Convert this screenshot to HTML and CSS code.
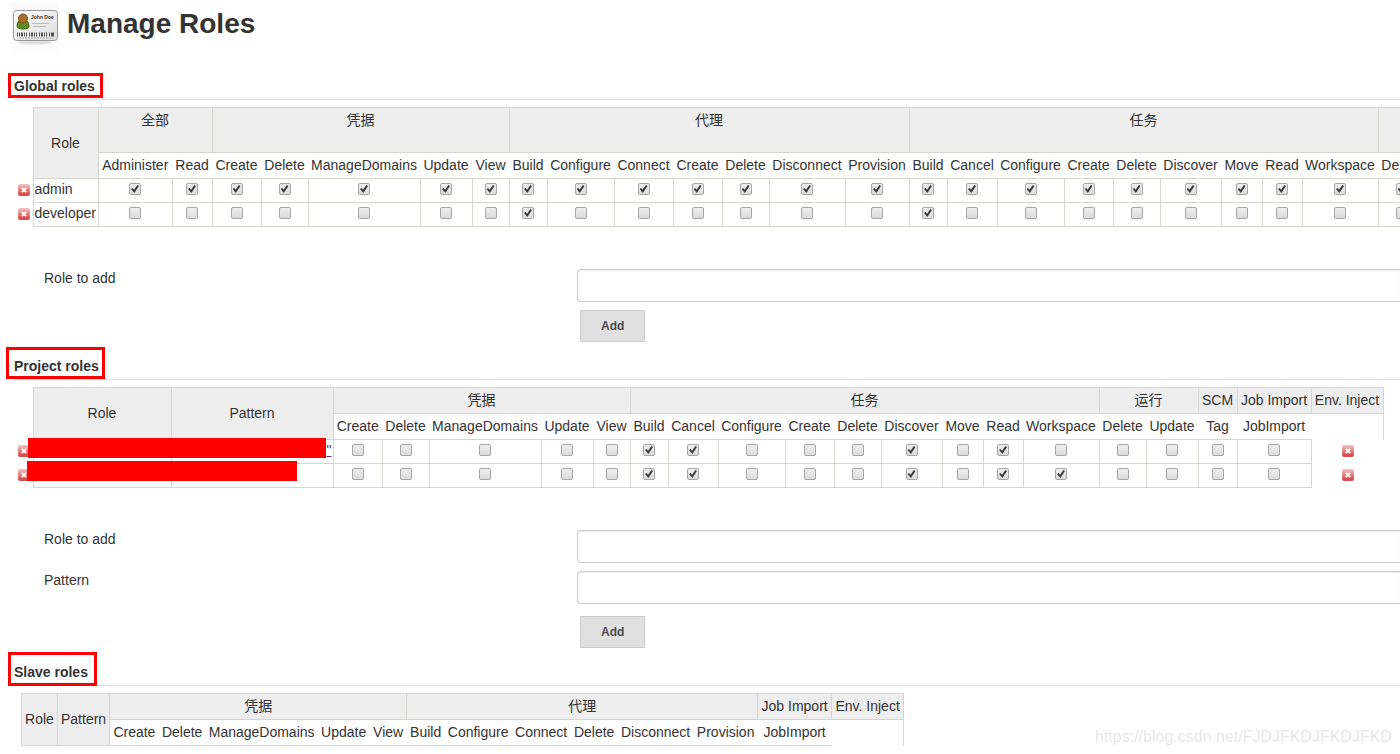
FILE: index.html
```html
<!DOCTYPE html>
<html lang="en">
<head>
<meta charset="utf-8">
<title>Manage Roles</title>
<link rel="stylesheet" href="styles.css">
</head>
<body>
<svg class="defs" aria-hidden="true">
  <defs>
    <linearGradient id="red" x1="0" y1="0" x2="0" y2="1"><stop offset="0" stop-color="#f3bcbc"/><stop offset="1" stop-color="#d93a3a"/></linearGradient>
    <linearGradient id="edge" x1="0" y1="0" x2="0" y2="1"><stop offset="0" stop-color="#f0c4c4"/><stop offset="1" stop-color="#d65050"/></linearGradient>
    <linearGradient id="card" x1="0" y1="0" x2="1" y2="1"><stop offset="0" stop-color="#ffffff"/><stop offset="1" stop-color="#dcdcdc"/></linearGradient>
    <symbol id="x" viewBox="0 0 16 16">
      <rect x="2.5" y="2.5" width="11" height="11" rx="1" fill="url(#red)" stroke="url(#edge)"/>
      <path d="M5.8 5.8l4.4 4.4M10.2 5.8l-4.4 4.4" stroke="#fff" stroke-width="1.8"/>
    </symbol>
  </defs>
</svg>
<main class="page">
  <header class="title">
    <svg class="title-icon" viewBox="0 0 48 48" aria-hidden="true">
      <rect width="48" height="48" fill="#fbfbfb"/>
      <ellipse cx="24" cy="40.500" rx="17" ry="2" fill="#e0e0e0"/>
      <rect x="2.500" y="8.500" width="44" height="30" rx="3" fill="url(#card)" stroke="#999"/>
      <path d="M6 24q0-6 6-6t6 6q0 3-6 3t-6-3z" fill="#5d8a1e" stroke="#40650f"/>
      <circle cx="12" cy="16.500" r="4.500" fill="#a8702a" stroke="#7b4b14"/>
      <text class="card-name" x="20" y="17">John Doe</text>
      <path d="M21 21.500h17M22 24.500h13" stroke="#bbb"/>
      <path d="M6.500 30.500v4M42.500 30.500v4" stroke="#555"/>
      <path d="M8 32.500h34" stroke="#555" stroke-width="4" stroke-dasharray="1 1 2 1 1 1 1 2"/>
      <path d="M8 36h34" stroke="#aaa" stroke-dasharray="2 1"/>
    </svg>
    <h1>Manage Roles</h1>
  </header>

  <section>
    <h2><span class="marked">Global roles</span></h2>
    <table class="roles tall">
      <colgroup><col class="c-tool"><col class="c-developer"><col class="c-administer"><col class="c-read"><col class="c-create"><col class="c-delete"><col class="c-domains"><col class="c-update"><col class="c-view"><col class="c-build"><col class="c-configure"><col class="c-connect"><col class="c-create"><col class="c-delete"><col class="c-workspace"><col class="c-provision"><col class="c-build"><col class="c-cancel"><col class="c-configure"><col class="c-create"><col class="c-delete"><col class="c-discover"><col class="c-move"><col class="c-read"><col class="c-workspace"><col class="c-delete"></colgroup>
      <thead>
        <tr><td class="tool" rowspan="2"></td><th class="group name" rowspan="2">Role</th><th class="group" colspan="2">全部</th><th class="group" colspan="5">凭据</th><th class="group" colspan="7">代理</th><th class="group" colspan="9">任务</th><th class="group"></th></tr>
        <tr><th>Administer</th><th>Read</th><th>Create</th><th>Delete</th><th>ManageDomains</th><th>Update</th><th>View</th><th>Build</th><th>Configure</th><th>Connect</th><th>Create</th><th>Delete</th><th>Disconnect</th><th>Provision</th><th>Build</th><th>Cancel</th><th>Configure</th><th>Create</th><th>Delete</th><th>Discover</th><th>Move</th><th>Read</th><th>Workspace</th><th>Delete</th></tr>
      </thead>
      <tbody>
        <tr>
          <td class="tool"><button class="remove" type="button" aria-label="Remove admin"><svg><use href="#x"/></svg></button></td><td class="who">admin</td>
          <td><input type="checkbox" aria-label="Administer" checked></td><td><input type="checkbox" aria-label="Read" checked></td>
          <td><input type="checkbox" aria-label="Create" checked></td><td><input type="checkbox" aria-label="Delete" checked></td><td><input type="checkbox" aria-label="ManageDomains" checked></td><td><input type="checkbox" aria-label="Update" checked></td><td><input type="checkbox" aria-label="View" checked></td>
          <td><input type="checkbox" aria-label="Build" checked></td><td><input type="checkbox" aria-label="Configure" checked></td><td><input type="checkbox" aria-label="Connect" checked></td><td><input type="checkbox" aria-label="Create" checked></td><td><input type="checkbox" aria-label="Delete" checked></td><td><input type="checkbox" aria-label="Disconnect" checked></td><td><input type="checkbox" aria-label="Provision" checked></td>
          <td><input type="checkbox" aria-label="Build" checked></td><td><input type="checkbox" aria-label="Cancel" checked></td><td><input type="checkbox" aria-label="Configure" checked></td><td><input type="checkbox" aria-label="Create" checked></td><td><input type="checkbox" aria-label="Delete" checked></td><td><input type="checkbox" aria-label="Discover" checked></td><td><input type="checkbox" aria-label="Move" checked></td><td><input type="checkbox" aria-label="Read" checked></td><td><input type="checkbox" aria-label="Workspace" checked></td>
          <td><input type="checkbox" aria-label="Delete" checked></td>
        </tr>
        <tr>
          <td class="tool"><button class="remove" type="button" aria-label="Remove developer"><svg><use href="#x"/></svg></button></td><td class="who">developer</td>
          <td><input type="checkbox" aria-label="Administer"></td><td><input type="checkbox" aria-label="Read"></td>
          <td><input type="checkbox" aria-label="Create"></td><td><input type="checkbox" aria-label="Delete"></td><td><input type="checkbox" aria-label="ManageDomains"></td><td><input type="checkbox" aria-label="Update"></td><td><input type="checkbox" aria-label="View"></td>
          <td><input type="checkbox" aria-label="Build" checked></td><td><input type="checkbox" aria-label="Configure"></td><td><input type="checkbox" aria-label="Connect"></td><td><input type="checkbox" aria-label="Create"></td><td><input type="checkbox" aria-label="Delete"></td><td><input type="checkbox" aria-label="Disconnect"></td><td><input type="checkbox" aria-label="Provision"></td>
          <td><input type="checkbox" aria-label="Build" checked></td><td><input type="checkbox" aria-label="Cancel"></td><td><input type="checkbox" aria-label="Configure"></td><td><input type="checkbox" aria-label="Create"></td><td><input type="checkbox" aria-label="Delete"></td><td><input type="checkbox" aria-label="Discover"></td><td><input type="checkbox" aria-label="Move"></td><td><input type="checkbox" aria-label="Read"></td><td><input type="checkbox" aria-label="Workspace"></td>
          <td><input type="checkbox" aria-label="Delete"></td>
        </tr>
      </tbody>
    </table>
    <form class="add">
      <div class="field"><label for="global-role">Role to add</label><input id="global-role" type="text"></div>
      <div class="field"><button class="submit" type="button">Add</button></div>
    </form>
  </section>

  <section>
    <h2><span class="marked project">Project roles</span></h2>
    <div class="covered">
    <table class="roles">
      <colgroup><col class="c-tool"><col class="c-name"><col class="c-pattern"><col class="c-create"><col class="c-delete"><col class="c-domains"><col class="c-update"><col class="c-view"><col class="c-build"><col class="c-cancel"><col class="c-configure"><col class="c-create"><col class="c-delete"><col class="c-discover"><col class="c-move"><col class="c-read"><col class="c-workspace"><col class="c-delete"><col class="c-update"><col class="c-tag"><col class="c-import"><col class="c-inject"></colgroup>
      <thead>
        <tr><td class="tool" rowspan="2"></td><th class="group name" rowspan="2">Role</th><th class="group name" rowspan="2">Pattern</th><th class="group" colspan="5">凭据</th><th class="group" colspan="9">任务</th><th class="group" colspan="2">运行</th><th class="group">SCM</th><th class="group">Job Import</th><th class="group">Env. Inject</th></tr>
        <tr><th>Create</th><th>Delete</th><th>ManageDomains</th><th>Update</th><th>View</th><th>Build</th><th>Cancel</th><th>Configure</th><th>Create</th><th>Delete</th><th>Discover</th><th>Move</th><th>Read</th><th>Workspace</th><th>Delete</th><th>Update</th><th>Tag</th><th>JobImport</th><td class="blank"></td></tr>
      </thead>
      <tbody>
        <tr>
          <td class="tool"><button class="remove" type="button" aria-label="Remove role"><svg><use href="#x"/></svg></button></td><td class="who"></td><td class="pattern"><a href="#">"</a></td>
          <td><input type="checkbox" aria-label="Create"></td><td><input type="checkbox" aria-label="Delete"></td><td><input type="checkbox" aria-label="ManageDomains"></td><td><input type="checkbox" aria-label="Update"></td><td><input type="checkbox" aria-label="View"></td>
          <td><input type="checkbox" aria-label="Build" checked></td><td><input type="checkbox" aria-label="Cancel" checked></td><td><input type="checkbox" aria-label="Configure"></td><td><input type="checkbox" aria-label="Create"></td><td><input type="checkbox" aria-label="Delete"></td><td><input type="checkbox" aria-label="Discover" checked></td><td><input type="checkbox" aria-label="Move"></td><td><input type="checkbox" aria-label="Read" checked></td><td><input type="checkbox" aria-label="Workspace"></td>
          <td><input type="checkbox" aria-label="Delete"></td><td><input type="checkbox" aria-label="Update"></td><td><input type="checkbox" aria-label="Tag"></td><td><input type="checkbox" aria-label="JobImport"></td>
          <td class="tool"><button class="remove" type="button" aria-label="Remove role"><svg><use href="#x"/></svg></button></td>
        </tr>
        <tr>
          <td class="tool"><button class="remove" type="button" aria-label="Remove role"><svg><use href="#x"/></svg></button></td><td class="who"></td><td class="pattern"></td>
          <td><input type="checkbox" aria-label="Create"></td><td><input type="checkbox" aria-label="Delete"></td><td><input type="checkbox" aria-label="ManageDomains"></td><td><input type="checkbox" aria-label="Update"></td><td><input type="checkbox" aria-label="View"></td>
          <td><input type="checkbox" aria-label="Build" checked></td><td><input type="checkbox" aria-label="Cancel" checked></td><td><input type="checkbox" aria-label="Configure"></td><td><input type="checkbox" aria-label="Create"></td><td><input type="checkbox" aria-label="Delete"></td><td><input type="checkbox" aria-label="Discover" checked></td><td><input type="checkbox" aria-label="Move"></td><td><input type="checkbox" aria-label="Read" checked></td><td><input type="checkbox" aria-label="Workspace" checked></td>
          <td><input type="checkbox" aria-label="Delete"></td><td><input type="checkbox" aria-label="Update"></td><td><input type="checkbox" aria-label="Tag"></td><td><input type="checkbox" aria-label="JobImport"></td>
          <td class="tool"><button class="remove" type="button" aria-label="Remove role"><svg><use href="#x"/></svg></button></td>
        </tr>
      </tbody>
    </table>
    <div class="cover first"></div>
    <div class="cover second"></div>
    </div>
    <form class="add">
      <div class="field"><label for="project-role">Role to add</label><input id="project-role" type="text"></div>
      <div class="field"><label for="project-pattern">Pattern</label><input id="project-pattern" type="text"></div>
      <div class="field spaced"><button class="submit" type="button">Add</button></div>
    </form>
  </section>

  <section>
    <h2><span class="marked slave">Slave roles</span></h2>
    <table class="roles empty">
      <colgroup><col class="c-role"><col class="c-update"><col class="c-create"><col class="c-delete"><col class="c-domains"><col class="c-update"><col class="c-view"><col class="c-build"><col class="c-configure"><col class="c-connect"><col class="c-delete"><col class="c-workspace"><col class="c-provision"><col class="c-import"><col class="c-inject"></colgroup>
      <thead>
        <tr><th class="group" rowspan="2">Role</th><th class="group" rowspan="2">Pattern</th><th class="group" colspan="5">凭据</th><th class="group" colspan="6">代理</th><th class="group">Job Import</th><th class="group">Env. Inject</th></tr>
        <tr><th>Create</th><th>Delete</th><th>ManageDomains</th><th>Update</th><th>View</th><th>Build</th><th>Configure</th><th>Connect</th><th>Delete</th><th>Disconnect</th><th>Provision</th><th>JobImport</th><td class="blank"></td></tr>
      </thead>
    </table>
  </section>
</main>
<div class="watermark">https://blog.csdn.net/FJDJFKDJFKDJFKD</div>
</body>
</html>
```
FILE: styles.css
```css
* { box-sizing: border-box; }

body {
  margin: 0;
  overflow: hidden;
  background: #fff;
  color: #333;
  font: 14px/17px "Liberation Sans", "Noto Sans CJK SC", sans-serif;
}

.defs { position: absolute; width: 0; height: 0; }

.page { padding: 2px 0 0 14px; }

.title {
  display: flex;
  align-items: flex-start;
  gap: 8px;
  height: 64px;
  margin-left: -3px;
}
.title-icon { width: 48px; height: 48px; }
.card-name { font: bold 5px "Liberation Sans", sans-serif; fill: #333; }
h1 { margin: 5px 0 0; font-size: 28px; line-height: 34px; }

section + section { margin-top: 4px; }

h2 {
  margin: 0 0 7px;
  padding: 12px 0 4px;
  border-bottom: 1px solid #ddd;
  font-size: 14px;
  line-height: 17px;
}
.marked { position: relative; }
.marked::after {
  content: "";
  position: absolute;
  inset: -5px -8px -4px -6px;
  border: 3px solid #f00;
}
.marked.project::after { inset: -11px -6px -5px -8px; }
.marked.slave::after { inset: -12px -9px -6px -6px; }

.roles {
  width: max-content;
  border-collapse: collapse;
  white-space: nowrap;
}
.roles.empty { margin-left: 7px; }
.roles th {
  padding: 4px 3px;
  border-bottom: 1px solid #d3d7cf;
  font-weight: normal;
}
.roles th.group {
  border: 1px solid #d3d7cf;
  background: #eee;
}
.tall th[colspan] { padding-bottom: 23px; }
.roles td {
  height: 24px;
  padding: 1px 1px 4px;
  border: 1px solid #d3d7cf;
  text-align: center;
}
.roles .tool { padding: 1px 0 2px 2px; border: 0; }
.roles .blank { border-width: 0 1px 0 0; }
.roles .who { text-align: left; }
.roles .pattern { text-align: right; }
.pattern a { color: #5c3566; }

.c-tool { width: 19px; }
.c-role { width: 36px; }
.c-view { width: 37px; }
.c-build { width: 38px; }
.c-tag { width: 39px; }
.c-read { width: 40px; }
.c-move { width: 41px; }
.c-delete { width: 47px; }
.c-create { width: 49px; }
.c-cancel { width: 50px; }
.c-update { width: 52px; }
.c-connect { width: 59px; }
.c-discover { width: 61px; }
.c-provision { width: 64px; }
.c-developer { width: 65px; }
.c-configure { width: 67px; }
.c-inject { width: 72px; }
.c-administer, .c-import { width: 74px; }
.c-workspace { width: 76px; }
.c-domains { width: 112px; }
.c-name { width: 138px; }
.c-pattern { width: 162px; }

input[type="checkbox"] {
  appearance: none;
  display: block;
  position: relative;
  width: 12px;
  height: 12px;
  margin: 0 auto;
  border: 1px solid #a6a6a6;
  border-radius: 2px;
  background: linear-gradient(#eee, #dcdcdc);
}
input[type="checkbox"]:checked::after {
  content: "";
  position: absolute;
  inset: 1px;
  background: #3c3c3c;
  clip-path: polygon(0 50%, 20% 38%, 38% 58%, 80% 0, 100% 14%, 42% 100%);
}

.remove {
  display: block;
  width: 16px;
  height: 16px;
  margin: 0 auto;
  padding: 0;
  border: 0;
  background: none;
}
.remove svg { display: block; width: 16px; height: 16px; }

.covered { position: relative; width: max-content; }
.cover { position: absolute; height: 20px; background: #f00; }
.first { top: 51px; left: 14px; width: 298px; }
.second { top: 74px; left: 13px; width: 270px; }

.add {
  display: grid;
  gap: 8px;
  padding: 42px 0 0 30px;
}
.field {
  display: grid;
  grid-template-columns: 533px 1fr;
  align-items: start;
}
.field.spaced { margin-top: 4px; }
.field label { padding-top: 1px; }
.field input {
  width: 100%;
  height: 33px;
  padding: 6px;
  border: 1px solid #ccc;
  border-right: 0;
  border-radius: 4px 0 0 4px;
  box-shadow: inset 0 1px 1px rgba(0, 0, 0, .08);
  font: inherit;
}
.submit {
  grid-column: 2;
  justify-self: start;
  height: 32px;
  margin-left: 3px;
  padding: 0 20px;
  border: 1px solid #ccc;
  border-radius: 1px;
  background: #e0e0e0;
  color: #4d4d4d;
  font: bold 12px "Liberation Sans", sans-serif;
}

.watermark {
  position: fixed;
  right: 8px;
  bottom: 9px;
  color: #e6e6e6;
  font-size: 16px;
}
```
